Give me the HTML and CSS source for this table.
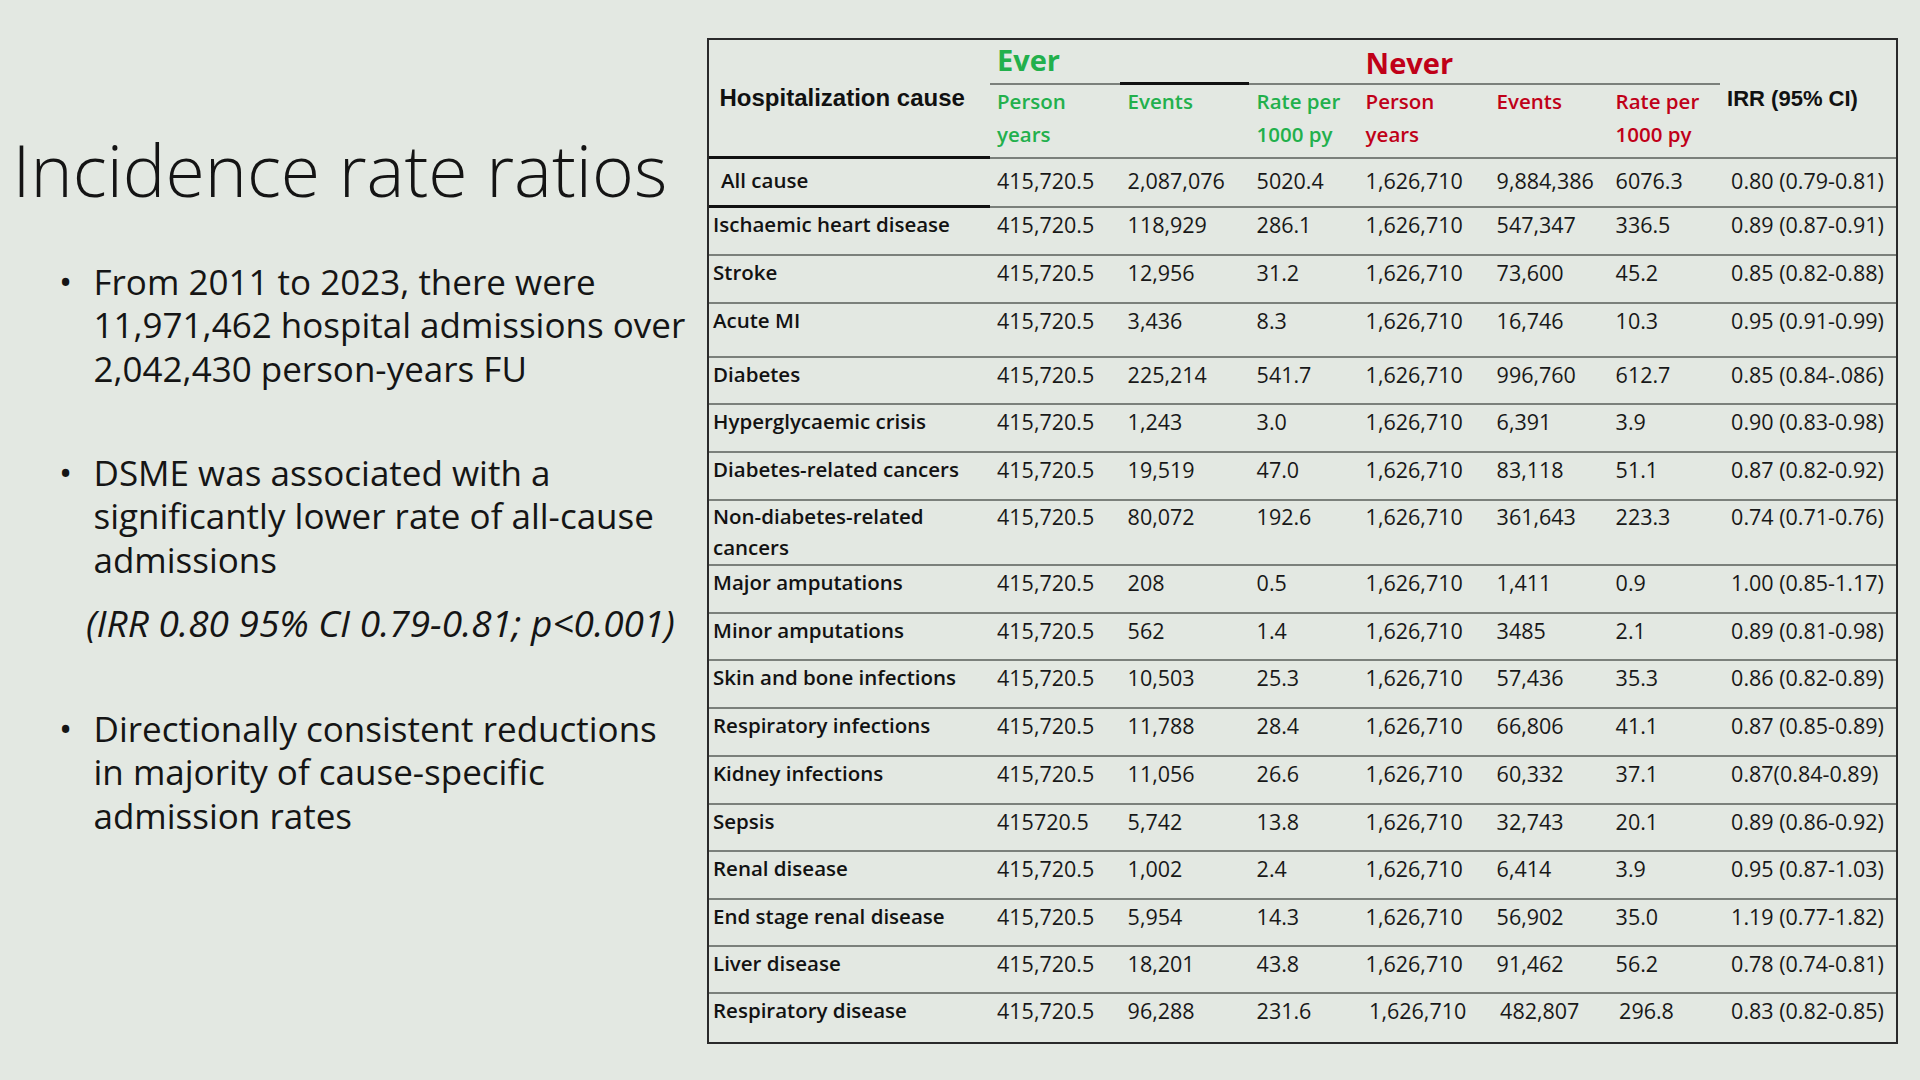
FILE: index.html
```html
<!DOCTYPE html>
<html lang="en">
<head>
<meta charset="utf-8">
<title>Incidence rate ratios</title>
<link rel="stylesheet" href="styles.css">
</head>
<body>
<div class="slide">
  <section class="intro">
    <h1 class="title">Incidence rate ratios</h1>
    <ul class="points points-first">
      <li>From 2011 to 2023, there were<br>11,971,462 hospital admissions over<br>2,042,430 person-years FU</li>
      <li>DSME was associated with a<br>significantly lower rate of all-cause<br>admissions</li>
    </ul>
    <p class="stat">(IRR 0.80 95% CI 0.79-0.81; p&lt;0.001)</p>
    <ul class="points points-last">
      <li>Directionally consistent reductions<br>in majority of cause-specific<br>admission rates</li>
    </ul>
  </section>

  <table class="irr">
    <colgroup>
      <col class="c-cause">
      <col class="c-py">
      <col class="c-ev">
      <col class="c-rate">
      <col class="c-py2">
      <col class="c-ev2">
      <col class="c-rate2">
      <col class="c-irr">
    </colgroup>
    <thead>
      <tr class="grp-row">
        <th class="cause-head" rowspan="2">Hospitalization cause</th>
        <th class="grp ever">Ever</th>
        <th class="grp grp-dark"></th>
        <th class="grp"></th>
        <th class="grp never">Never</th>
        <th class="grp"></th>
        <th class="grp"></th>
        <th class="irr-head" rowspan="2">IRR (95% CI)</th>
      </tr>
      <tr class="sub-row">
        <th class="sub ever">Person<br>years</th>
        <th class="sub ever">Events</th>
        <th class="sub ever">Rate per<br>1000 py</th>
        <th class="sub never">Person<br>years</th>
        <th class="sub never">Events</th>
        <th class="sub never">Rate per<br>1000 py</th>
      </tr>
    </thead>
    <tbody>
      <tr class="row-all">
        <td class="cause cause-all">All cause</td><td>415,720.5</td><td>2,087,076</td><td>5020.4</td><td>1,626,710</td><td>9,884,386</td><td>6076.3</td><td class="irr-val">0.80 (0.79-0.81)</td>
      </tr>
      <tr class="row">
        <td class="cause">Ischaemic heart disease</td><td>415,720.5</td><td>118,929</td><td>286.1</td><td>1,626,710</td><td>547,347</td><td>336.5</td><td class="irr-val">0.89 (0.87-0.91)</td>
      </tr>
      <tr class="row">
        <td class="cause">Stroke</td><td>415,720.5</td><td>12,956</td><td>31.2</td><td>1,626,710</td><td>73,600</td><td>45.2</td><td class="irr-val">0.85 (0.82-0.88)</td>
      </tr>
      <tr class="row row-tall">
        <td class="cause">Acute MI</td><td>415,720.5</td><td>3,436</td><td>8.3</td><td>1,626,710</td><td>16,746</td><td>10.3</td><td class="irr-val">0.95 (0.91-0.99)</td>
      </tr>
      <tr class="row">
        <td class="cause">Diabetes</td><td>415,720.5</td><td>225,214</td><td>541.7</td><td>1,626,710</td><td>996,760</td><td>612.7</td><td class="irr-val">0.85 (0.84-.086)</td>
      </tr>
      <tr class="row">
        <td class="cause">Hyperglycaemic crisis</td><td>415,720.5</td><td>1,243</td><td>3.0</td><td>1,626,710</td><td>6,391</td><td>3.9</td><td class="irr-val">0.90 (0.83-0.98)</td>
      </tr>
      <tr class="row">
        <td class="cause">Diabetes-related cancers</td><td>415,720.5</td><td>19,519</td><td>47.0</td><td>1,626,710</td><td>83,118</td><td>51.1</td><td class="irr-val">0.87 (0.82-0.92)</td>
      </tr>
      <tr class="row row-two">
        <td class="cause">Non-diabetes-related<br>cancers</td><td>415,720.5</td><td>80,072</td><td>192.6</td><td>1,626,710</td><td>361,643</td><td>223.3</td><td class="irr-val">0.74 (0.71-0.76)</td>
      </tr>
      <tr class="row">
        <td class="cause">Major amputations</td><td>415,720.5</td><td>208</td><td>0.5</td><td>1,626,710</td><td>1,411</td><td>0.9</td><td class="irr-val">1.00 (0.85-1.17)</td>
      </tr>
      <tr class="row">
        <td class="cause">Minor amputations</td><td>415,720.5</td><td>562</td><td>1.4</td><td>1,626,710</td><td>3485</td><td>2.1</td><td class="irr-val">0.89 (0.81-0.98)</td>
      </tr>
      <tr class="row">
        <td class="cause">Skin and bone infections</td><td>415,720.5</td><td>10,503</td><td>25.3</td><td>1,626,710</td><td>57,436</td><td>35.3</td><td class="irr-val">0.86 (0.82-0.89)</td>
      </tr>
      <tr class="row">
        <td class="cause">Respiratory infections</td><td>415,720.5</td><td>11,788</td><td>28.4</td><td>1,626,710</td><td>66,806</td><td>41.1</td><td class="irr-val">0.87 (0.85-0.89)</td>
      </tr>
      <tr class="row">
        <td class="cause">Kidney infections</td><td>415,720.5</td><td>11,056</td><td>26.6</td><td>1,626,710</td><td>60,332</td><td>37.1</td><td class="irr-val">0.87(0.84-0.89)</td>
      </tr>
      <tr class="row">
        <td class="cause">Sepsis</td><td>415720.5</td><td>5,742</td><td>13.8</td><td>1,626,710</td><td>32,743</td><td>20.1</td><td class="irr-val">0.89 (0.86-0.92)</td>
      </tr>
      <tr class="row">
        <td class="cause">Renal disease</td><td>415,720.5</td><td>1,002</td><td>2.4</td><td>1,626,710</td><td>6,414</td><td>3.9</td><td class="irr-val">0.95 (0.87-1.03)</td>
      </tr>
      <tr class="row row-short">
        <td class="cause">End stage renal disease</td><td>415,720.5</td><td>5,954</td><td>14.3</td><td>1,626,710</td><td>56,902</td><td>35.0</td><td class="irr-val">1.19 (0.77-1.82)</td>
      </tr>
      <tr class="row">
        <td class="cause">Liver disease</td><td>415,720.5</td><td>18,201</td><td>43.8</td><td>1,626,710</td><td>91,462</td><td>56.2</td><td class="irr-val">0.78 (0.74-0.81)</td>
      </tr>
      <tr class="row row-last">
        <td class="cause">Respiratory disease</td><td>415,720.5</td><td>96,288</td><td>231.6</td><td class="nudge">1,626,710</td><td class="nudge">482,807</td><td class="nudge">296.8</td><td class="irr-val">0.83 (0.82-0.85)</td>
      </tr>
    </tbody>
  </table>
</div>
</body>
</html>
```

FILE: styles.css
```css
* {
  box-sizing: border-box;
}

html, body {
  margin: 0;
  padding: 0;
}

body {
  background: #e3e8e2;
  color: #151515;
  font-family: "Open Sans", "Noto Sans", sans-serif;
}

.slide {
  display: flex;
  align-items: flex-start;
  width: 1920px;
  height: 1080px;
  overflow: hidden;
}

/* ---------- left column ---------- */
.intro {
  width: 706.5px;
  flex-shrink: 0;
}

.title {
  margin: 130px 0 0;
  padding-left: 12.5px;
  font-weight: 300;
  font-size: 71.5px;
  line-height: 80px;
  white-space: nowrap;
  color: #141414;
}

.points {
  list-style: none;
  margin: 0;
  padding: 0 0 0 59px;
}

.points li {
  display: flex;
  font-size: 35px;
  line-height: 43.5px;
  white-space: nowrap;
}

.points li::before {
  content: "\2022";
  width: 34.5px;
  flex-shrink: 0;
}

.points li + li {
  margin-top: 60.5px;
}

.points-first {
  margin-top: 49.5px;
}

.stat {
  margin: 20px 0 0;
  padding-left: 86px;
  font-style: italic;
  font-size: 37px;
  line-height: 43.5px;
  white-space: nowrap;
}

.points-last {
  margin-top: 62px;
}

/* ---------- table ---------- */
.irr {
  margin-top: 38px;
  width: 1191.5px;
  border: 2px solid #2a2a2a;
  border-collapse: separate;
  border-spacing: 0;
  table-layout: fixed;
  font-size: 21.5px;
  line-height: 33px;
  color: #181818;
}

.c-cause { width: 281px; }
.c-py    { width: 130.6px; }
.c-ev    { width: 129px; }
.c-rate  { width: 109px; }
.c-py2   { width: 131px; }
.c-ev2   { width: 119px; }
.c-rate2 { width: 112px; }
.c-irr   { width: 176px; }

.irr th,
.irr td {
  padding: 0 0 0 7.5px;
  text-align: left;
  vertical-align: top;
  white-space: nowrap;
  border-bottom: 2px solid #7b807b;
}

/* header */
.cause-head,
.irr-head {
  font-family: "Liberation Sans", Arial, sans-serif;
  font-weight: 700;
  font-size: 23px;
  line-height: 28px;
  color: #111;
  vertical-align: middle !important;
}

.cause-head {
  padding-left: 11px !important;
  font-size: 24px;
  border-bottom: 3px solid #111 !important;
}

.irr-head {
  padding-left: 7px !important;
  font-size: 22px;
}

.grp-row th.grp {
  height: 44.5px;
  font-family: "Open Sans", sans-serif;
  font-weight: 700;
  font-size: 29px;
  line-height: 40px;
  vertical-align: bottom;
}

.grp-row th.grp-dark {
  border-bottom: 3px solid #111;
}

.ever {
  color: #22b04c;
}

.never {
  color: #c00018;
}

.grp-row th.ever {
  padding-bottom: 2.5px;
}

.grp-row th.never {
  padding-bottom: 1px;
  line-height: 38px;
}

.sub-row th.sub {
  height: 74.7px;
  font-weight: 600;
  font-size: 20.5px;
  line-height: 33px;
}

/* body */
.cause {
  font-weight: 600;
  font-size: 20.5px;
  padding-left: 4.5px !important;
  color: #121212;
}

.cause-all {
  padding-left: 12.5px !important;
}

.row-all td {
  height: 49px;
  padding-top: 5px;
}

.row-all td.cause {
  border-bottom: 3px solid #111;
}

.row td {
  height: 47.75px;
}

.row-tall td {
  height: 53.9px;
}

.row-two td {
  height: 64.9px;
  line-height: 31.5px;
}

.row-short td {
  height: 46.5px;
}

.row-last td {
  height: 48px;
  border-bottom: none;
}

.irr-val {
  padding-left: 11px !important;
}

.nudge {
  padding-left: 11px !important;
}
```
